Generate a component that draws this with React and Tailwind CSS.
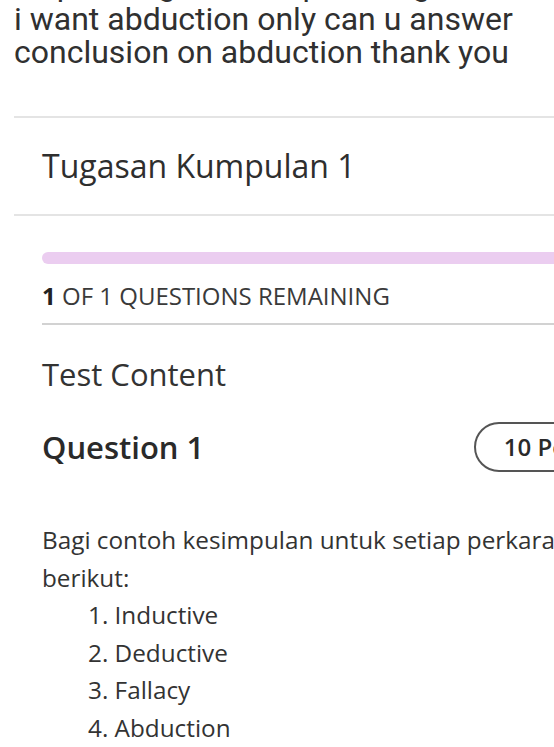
export default function App() {
  const roboto = { fontFamily: 'Roboto, "Liberation Sans", sans-serif' };
  const openSans = { fontFamily: '"Open Sans", "Noto Sans", sans-serif' };

  const items = ['1. Inductive', '2. Deductive', '3. Fallacy', '4. Abduction'];

  return (
    <div className="w-[554px] h-[747px] overflow-hidden bg-white">
      {/* comment text above the screenshot, previous line only shows its descenders */}
      <div style={roboto} className="px-[14px] text-[32px] leading-[33px] text-[#303030] whitespace-nowrap">
        <div className="h-[3px] overflow-hidden">
          <p className="-mt-[31px]">so please give example using the reasoning</p>
        </div>
        <p>i want abduction only can u answer</p>
        <p>conclusion on abduction thank you</p>
      </div>

      <div style={openSans} className="text-[#333]">
        <div className="mt-[47px] ml-[14px] w-[700px] border-t-2 border-[#e4e4e4]" />

        <div className="pl-[28px] py-[28px] ml-[14px]">
          <h1 className="text-[32px] leading-[40px] font-medium text-[#2e2e2e]">Tugasan Kumpulan 1</h1>
        </div>

        <div className="ml-[14px] w-[700px] border-t-2 border-[#e4e4e4]" />

        <div className="pl-[42px] w-[720px]">
          {/* progress */}
          <div className="mt-[36px] h-[12px] rounded-full bg-[#ebcdf0]" />

          <p className="mt-[17px] mb-[12px] text-[24px] leading-[30px] text-[#3a3a3a] whitespace-nowrap">
            <span className="font-bold text-[#222]">1</span> OF 1 QUESTIONS REMAINING
          </p>

          <div className="border-t-2 border-[#d2d2d2]" />

          <h2 className="mt-[29px] text-[31px] leading-[40px] text-[#333]">Test Content</h2>

          {/* question header */}
          <div className="mt-[28px] flex items-center w-[598px]">
            <h3 className="flex-1 text-[31px] leading-[40px] font-semibold text-[#2a2a2a]">Question 1</h3>
            <span className="h-[50px] flex items-center rounded-full border-2 border-[#555] px-[28px] text-[24px] font-semibold text-[#2a2a2a] whitespace-nowrap">
              10 Points
            </span>
          </div>

          <div className="mt-[49px] text-[24.3px] leading-[37.5px] text-[#333] w-[600px]">
            <p className="whitespace-nowrap">Bagi contoh kesimpulan untuk setiap perkara</p>
            <p>berikut:</p>
            <div className="pl-[46px]">
              {items.map((item) => (
                <p key={item}>{item}</p>
              ))}
            </div>
          </div>
        </div>
      </div>
    </div>
  );
}
